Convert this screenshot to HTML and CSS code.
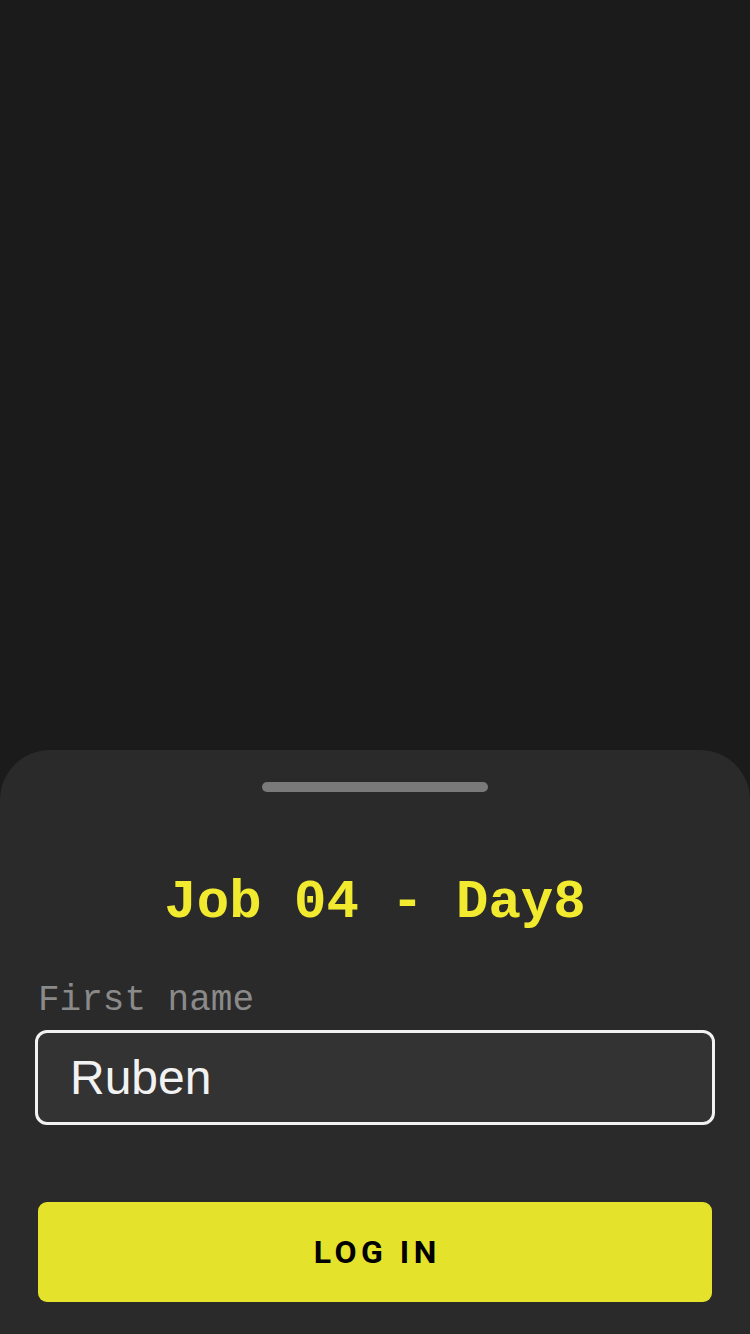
FILE: index.html
```html
<!DOCTYPE html>
<html lang="en">
<head>
<meta charset="utf-8">
<title>Job 04 - Day8</title>
<link rel="stylesheet" href="styles.css">
</head>
<body>
<div class="screen">
  <div class="backdrop"></div>
  <div class="sheet">
    <div class="handle"></div>
    <h1 class="title">Job 04 - Day8</h1>
    <label class="label" for="firstName">First name</label>
    <input class="field" id="firstName" type="text" value="Ruben">
    <button class="button" type="button">LOG IN</button>
  </div>
</div>
</body>
</html>
```
FILE: styles.css
```css
html, body {
  margin: 0;
  padding: 0;
  background: #1b1b1b;
}
.screen {
  width: 750px;
  height: 1334px;
  display: flex;
  flex-direction: column;
  overflow: hidden;
}
.backdrop {
  flex: 1;
}
.sheet {
  height: 584px;
  box-sizing: border-box;
  background: #2a2a2a;
  border-radius: 50px 50px 0 0;
  padding: 32px 35px 0;
  display: flex;
  flex-direction: column;
}
.handle {
  align-self: center;
  width: 226px;
  height: 10px;
  border-radius: 5px;
  background: #7a7a7a;
}
.title {
  margin: 81px 0 0;
  font-family: "Liberation Mono", "Courier New", monospace;
  font-weight: bold;
  font-size: 54px;
  line-height: 60px;
  color: #f2ea2e;
  text-align: center;
}
.label {
  margin: 48px 0 0 3px;
  font-family: "Liberation Mono", "Courier New", monospace;
  font-size: 36px;
  line-height: 40px;
  color: #8a8a8a;
}
.field {
  margin-top: 9px;
  height: 95px;
  box-sizing: border-box;
  border: 3px solid #f2f2f2;
  border-radius: 12px;
  background: #333333;
  padding: 0 0 0 32px;
  font-family: "Liberation Sans", Arial, sans-serif;
  font-size: 48px;
  color: #f2f2f2;
  outline: none;
}
.button {
  margin: 77px 3px 0;
  height: 100px;
  border: none;
  border-radius: 9px;
  background: #e5e22c;
  font-family: Roboto, "Liberation Sans", sans-serif;
  font-weight: bold;
  font-size: 32px;
  letter-spacing: 4.5px;
  text-indent: 4.5px;
  color: #000000;
}
```
